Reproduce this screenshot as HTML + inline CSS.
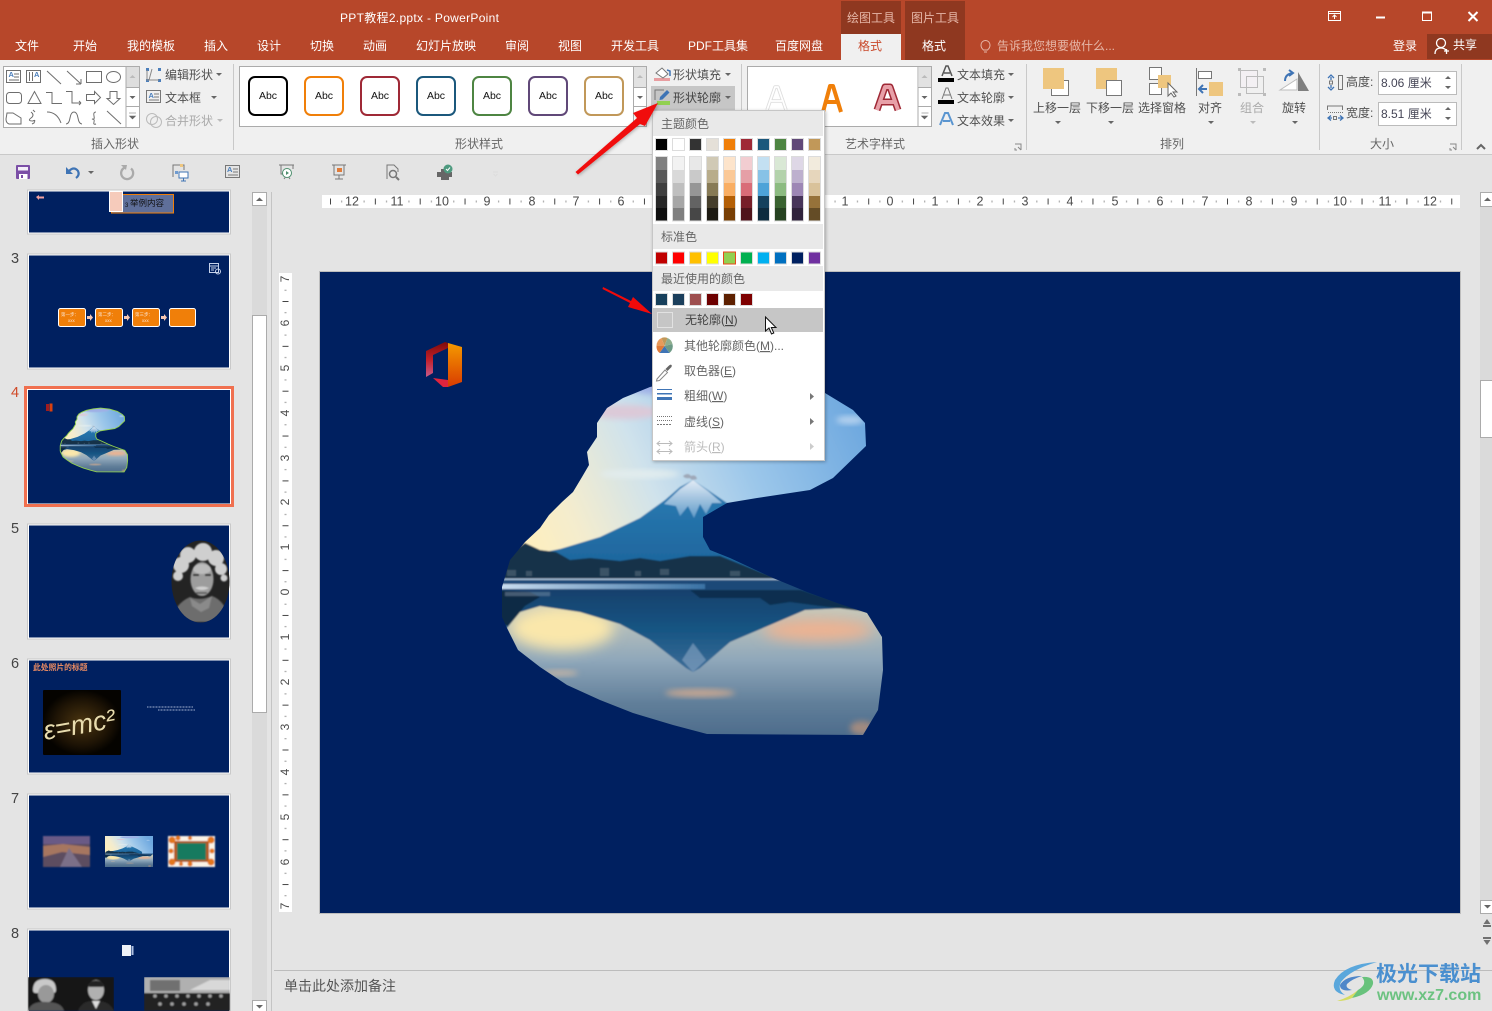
<!DOCTYPE html>
<html lang="zh"><head><meta charset="utf-8"><title>PPT教程2.pptx - PowerPoint</title>
<style>html,body{margin:0;padding:0;background:#e4e4e4;overflow:hidden;width:1492px;height:1011px}svg{display:block}text{font-family:"Liberation Sans","Noto Sans CJK SC",sans-serif}</style></head><body>
<svg xmlns="http://www.w3.org/2000/svg" width="1492" height="1011" viewBox="0 0 1492 1011" font-size="12" fill="#505050">
<defs>
<linearGradient id="sky" gradientUnits="userSpaceOnUse" x1="850" y1="395" x2="530" y2="540"><stop offset="0" stop-color="#6ea8df"/><stop offset=".35" stop-color="#9cc7ea"/><stop offset=".62" stop-color="#cfe2ec"/><stop offset=".85" stop-color="#f3eccf"/><stop offset="1" stop-color="#fdeebf"/></linearGradient>
<linearGradient id="mt" x1="0" y1="0" x2="0" y2="1"><stop offset="0" stop-color="#2a7cb4"/><stop offset="1" stop-color="#1b6198"/></linearGradient>
<linearGradient id="snow" x1="0" y1="0" x2="0" y2="1"><stop offset="0" stop-color="#e3ecf6"/><stop offset="1" stop-color="#5f9ac8"/></linearGradient>
<linearGradient id="low" gradientUnits="userSpaceOnUse" x1="0" y1="610" x2="0" y2="735"><stop offset="0" stop-color="#c4c8bb"/><stop offset=".4" stop-color="#8fa7ba"/><stop offset=".75" stop-color="#607e99"/><stop offset="1" stop-color="#4d6c8c"/></linearGradient>
<linearGradient id="shore" gradientUnits="userSpaceOnUse" x1="502" y1="0" x2="720" y2="0"><stop offset="0" stop-color="#c8dcef"/><stop offset="1" stop-color="#2f6a9f"/></linearGradient>
<linearGradient id="water" gradientUnits="userSpaceOnUse" x1="0" y1="588" x2="0" y2="672"><stop offset="0" stop-color="#123f6b"/><stop offset=".5" stop-color="#175583"/><stop offset="1" stop-color="#3d6d98"/></linearGradient>
<linearGradient id="off1" x1="0" y1="0" x2="0" y2="1"><stop offset="0" stop-color="#f59a00"/><stop offset="1" stop-color="#d83b01"/></linearGradient>
<linearGradient id="off2" x1="0" y1="0" x2="0" y2="1"><stop offset="0" stop-color="#7d0a0a"/><stop offset=".5" stop-color="#c0202a"/><stop offset="1" stop-color="#c85a8a"/></linearGradient>
<radialGradient id="emc"><stop offset="0" stop-color="#4b3510"/><stop offset=".7" stop-color="#1d1305"/><stop offset="1" stop-color="#050300"/></radialGradient>
<filter id="b3" x="-30%" y="-30%" width="160%" height="160%"><feGaussianBlur stdDeviation="3"/></filter>
<filter id="b6" x="-40%" y="-40%" width="180%" height="180%"><feGaussianBlur stdDeviation="7"/></filter>
<filter id="b1" x="-20%" y="-20%" width="140%" height="140%"><feGaussianBlur stdDeviation=".7"/></filter>
<filter id="bs" x="-5%" y="-5%" width="110%" height="110%"><feGaussianBlur stdDeviation=".9"/></filter>
<filter id="sh" x="-5%" y="-5%" width="110%" height="110%"><feDropShadow dx="1" dy="1" stdDeviation="1.500" flood-color="#000" flood-opacity=".28"/></filter>
<clipPath id="blob"><path id="blobp" d="M650 387L690 378L730 374L780 380L825 393L853 410L865 423L866 446L833 478L810 490L757 498L727 503L703 517L703 537L710 550L730 558L773 578L807 592L837 603L867 613L882 637L883 670L878 710L863 735L707 734L673 725L633 713L600 700L567 685L540 667L518 650L507 628L502 617L502 587L510 560L525 542L540 528L549 515L562 502L573 492L582 477L589 465L587 452L597 437L597 423L607 408L623 398Z"/></clipPath>
<g id="scene"><g filter="url(#bs)">
<rect x="490" y="370" width="400" height="218" fill="url(#sky)"/>
<ellipse cx="625" cy="412" rx="35" ry="7" fill="#dcc9d8" filter="url(#b3)"/><ellipse cx="700" cy="385" rx="80" ry="12" fill="#9fb0e6" filter="url(#b3)"/><ellipse cx="850" cy="420" rx="14" ry="4" fill="#b5d2ee" filter="url(#b3)"/><ellipse cx="640" cy="474" rx="40" ry="4" fill="#e3edee" filter="url(#b3)"/>
<path d="M545 552L560 549L600 537L640 518L665 500L680 487L693 480L708 490L727 503L760 525L800 560L800 584L525 584Z" fill="url(#mt)"/>
<path d="M664 504L680 489L693 480L708 491L722 503L712 503L706 514L700 504L694 518L688 506L680 516L676 506Z" fill="url(#snow)"/>
<path d="M683 476q5-4 8 0q5-2 6 3q-6 2-7-1q-5 1-7-2z" fill="#9fa8b8"/>
<path d="M495 582L500 560L525 543L540 550L556 552L570 560L590 558L620 561L640 558L660 561L690 556L720 556L760 572L790 582Z" fill="#14324a"/>
<g fill="#5c6f7e" opacity=".55"><rect x="507" y="570" width="9" height="6"/><rect x="526" y="571" width="6" height="5"/><rect x="600" y="568" width="9" height="8"/><rect x="635" y="571" width="6" height="5"/><rect x="660" y="569" width="9" height="6"/><rect x="730" y="571" width="10" height="5"/></g>
<rect x="490" y="580" width="400" height="10" fill="#1a4a78"/><rect x="502" y="578.500" width="280" height="1.500" fill="#a9c2d9"/><rect x="490" y="584" width="215" height="5" fill="url(#shore)"/>
<rect x="490" y="590" width="400" height="150" fill="url(#low)"/>
<ellipse cx="562" cy="628" rx="52" ry="22" fill="#fae7ab" filter="url(#b6)"/><ellipse cx="818" cy="630" rx="55" ry="11" fill="#efb290" filter="url(#b6)"/><ellipse cx="700" cy="693" rx="35" ry="4" fill="#c3a592" filter="url(#b3)"/><ellipse cx="560" cy="673" rx="18" ry="3" fill="#c0b3a6" filter="url(#b3)"/><ellipse cx="862" cy="728" rx="12" ry="7" fill="#a08a80" filter="url(#b3)"/>
<path d="M490 590L885 590L870 612L845 608L805 610L770 625L730 642L700 668L693 672L686 668L650 640L620 624L580 612L540 606L520 612L507 628L490 630Z" fill="url(#water)"/>
<path d="M682 660L693 643L706 660L693 672Z" fill="#8aa6c4" opacity=".6"/>
<path d="M490 590L530 592L540 597L525 606L508 626L495 622Z" fill="#112b45"/><rect x="505" y="592" width="45" height="4" fill="#8397ab" opacity=".45"/>
<path d="M690 590L800 590L870 612L820 606L790 602L770 605L760 598L700 598Z" fill="#0c2b4a" opacity=".85"/>
</g></g>
<g id="mtn"><g clip-path="url(#blob)"><use href="#scene"/></g></g>
<g id="arr"><path d="M0 0l3 3 3-3z" fill="#666"/></g>
<clipPath id="c8a"><rect x="28" y="977" width="86" height="34"/></clipPath>
<clipPath id="c8b"><rect x="144" y="977" width="86" height="34"/></clipPath>
<clipPath id="cein"><ellipse cx="200.500" cy="581.500" rx="29" ry="41"/></clipPath>
</defs>

<!-- base -->
<rect width="1492" height="1011" fill="#e4e4e4"/>
<!-- title bar -->
<rect width="1492" height="60" fill="#b7472a"/>
<g fill="#8f3820"><rect x="841" y="1" width="60" height="33"/><rect x="905" y="1" width="60" height="59"/><rect x="1427" y="34" width="65" height="25"/></g>
<rect x="841" y="34" width="60" height="27" fill="#f0f0f0"/>
<text x="340" y="22" fill="#fff" letter-spacing=".3">PPT教程2.pptx - PowerPoint</text>
<text x="847" y="22" fill="#e6b7a8">绘图工具</text><text x="911" y="22" fill="#e6b7a8">图片工具</text>
<g fill="#fff">
<text x="15" y="50">文件</text><text x="73" y="50">开始</text><text x="127" y="50">我的模板</text><text x="204" y="50">插入</text><text x="257" y="50">设计</text><text x="310" y="50">切换</text><text x="363" y="50">动画</text><text x="416" y="50">幻灯片放映</text><text x="505" y="50">审阅</text><text x="558" y="50">视图</text><text x="611" y="50">开发工具</text><text x="688" y="50">PDF工具集</text><text x="775" y="50">百度网盘</text><text x="922" y="50">格式</text><text x="1393" y="50">登录</text><text x="1453" y="49">共享</text>
</g>
<text x="858" y="50" fill="#c9492b">格式</text>
<g fill="none" stroke="#e6b7a8"><path d="M983.500 50q-2.500-2-2.500-5a4.500 4.500 0 0 1 9 0q0 3-2.500 5z"/><path d="M984 52h3"/></g>
<text x="997" y="50" fill="#e6b7a8">告诉我您想要做什么...</text>
<g fill="none" stroke="#fff"><rect x="1328.500" y="11.500" width="12" height="9"/><path d="M1328 13.500h13M1334.500 19v-4M1332.500 17l2-2 2 2"/><rect x="1422.500" y="12" width="9" height="8.500" stroke-width="1"/><path d="M1422 12.500h10" stroke-width="2"/><path d="M1468.500 12l9 9M1477.500 12l-9 9" stroke-width="2"/><path d="M1376 17.500h9" stroke-width="2"/>
<circle cx="1441" cy="43" r="4.500" stroke-width="1.300"/><path d="M1435 54q0-6 6-6q3 0 5 2M1444 51h5M1446.500 49v5" stroke-width="1.300"/></g>

<!-- ribbon -->
<rect y="60" width="1492" height="94" fill="#f0f0f0"/><rect y="154" width="1492" height="1" fill="#c9c9c9"/>
<g fill="#c9c9c9"><rect x="233" y="64" width="1" height="86"/><rect x="741" y="64" width="1" height="86"/><rect x="1026" y="64" width="1" height="86"/><rect x="1319" y="64" width="1" height="86"/><rect x="1461" y="64" width="1" height="86"/></g>
<g fill="#666"><text x="91" y="148">插入形状</text><text x="455" y="148">形状样式</text><text x="845" y="148">艺术字样式</text><text x="1160" y="148">排列</text><text x="1370" y="148">大小</text></g>

<!-- shape gallery -->
<rect x="3.500" y="66.500" width="136" height="61" fill="#fff" stroke="#ababab"/>
<rect x="126" y="67" width="13" height="20" fill="#dedede"/><path d="M126 66.500v61M126 87.500h13M126 106.500h13" stroke="#ababab" fill="none"/>
<path d="M129.500 78l3-3 3 3z" fill="#bbb"/><path d="M129.500 96l3 3 3-3z" fill="#666"/><path d="M129 113h7M129.500 116l3 3 3-3z" fill="#666" stroke="#666" stroke-width=".6"/>
<g fill="none" stroke="#6e6e6e" stroke-width="1">
<rect x="6.500" y="70.500" width="14" height="12"/><path d="M14 74h5M14 77h5M9 80h10"/>
<rect x="26.500" y="70.500" width="14" height="12"/><path d="M29.500 72v9M32.500 72v9"/>
<path d="M47 71l14 13M67 71l14 13M81 84v-5M81 84h-5"/>
<rect x="86.500" y="71.500" width="15" height="11"/><ellipse cx="113.500" cy="77" rx="7" ry="5.500"/>
<rect x="6.500" y="92.500" width="15" height="11" rx="3"/><path d="M28 103.500l6.500-12 6.500 12z"/><path d="M46 92.500h6v11h10M66 91.500h6v11.500h9M81 103l-2-2M81 103l-2 2"/>
<path d="M86.500 94.500h8v-3l6 6-6 6v-3h-8zM110 91.500h7v7h3l-6.500 6-6.500-6h3z"/>
<path d="M7 113h6l8 5v6H9q-3-1-3-5z"/><path d="M31 112q4 3 0 6t2 3q3-2 1 2l-2 1M33 110l2 2"/><path d="M47 112q10 0 14 11M66 124q3 0 4-6t4-6q3 0 4 6t4 6"/><path d="M96 112q-3 0-2 4t-2 3q3 0 2 3t2 2"/><path d="M107 111l14 13"/>
</g>
<text x="8.500" y="77" font-size="7.500" font-weight="700" fill="#4a7ebb">A</text><text x="34" y="77" font-size="7.500" font-weight="700" fill="#4a7ebb">A</text>
<g fill="#4a7ebb"><rect x="146" y="68" width="3" height="3"/><rect x="158" y="68" width="3" height="3"/><rect x="146" y="79" width="3" height="3"/><rect x="158" y="79" width="3" height="3"/></g><path d="M147 70v10h12M152 69l-3 11" fill="none" stroke="#888"/>
<text x="165" y="79">编辑形状</text><use href="#arr" x="216" y="73"/>
<g fill="none" stroke="#777"><rect x="146.500" y="90.500" width="14" height="12"/><path d="M154 94h5M154 97h5M149 100h10"/></g><text x="148.500" y="98" font-size="7.500" font-weight="700" fill="#4a7ebb">A</text>
<text x="165" y="102">文本框</text><use href="#arr" x="211" y="96"/>
<g fill="none" stroke="#bbb"><circle cx="152" cy="119" r="5.500"/><circle cx="156" cy="122" r="5.500"/></g>
<text x="165" y="125" fill="#aaa">合并形状</text><path d="M217 119l3 3 3-3z" fill="#bbb"/>

<!-- shape styles -->
<rect x="239.500" y="66.500" width="407" height="60" fill="#fff" stroke="#ababab"/>
<rect x="634" y="67" width="12" height="20" fill="#e2e2e2"/><path d="M633.500 66.500v60M633.500 87.500h13M633.500 106.500h13" stroke="#ababab" fill="none"/>
<path d="M637 78l3-3 3 3z" fill="#bbb"/><path d="M637 96l3 3 3-3z" fill="#666"/><path d="M637 113h7M637 116l3 3 3-3z" fill="#666" stroke="#666" stroke-width=".6"/>
<g fill="#fff" stroke-width="2"><rect x="249" y="77" width="38" height="38" rx="6" stroke="#000"/><rect x="305" y="77" width="38" height="38" rx="6" stroke="#f07f09"/><rect x="361" y="77" width="38" height="38" rx="6" stroke="#9f2936"/><rect x="417" y="77" width="38" height="38" rx="6" stroke="#1b587c"/><rect x="473" y="77" width="38" height="38" rx="6" stroke="#4e8542"/><rect x="529" y="77" width="38" height="38" rx="6" stroke="#604878"/><rect x="585" y="77" width="38" height="38" rx="6" stroke="#c19859"/></g>
<g fill="#111" font-size="10.500" text-anchor="middle"><text x="268" y="99">Abc</text><text x="324" y="99">Abc</text><text x="380" y="99">Abc</text><text x="436" y="99">Abc</text><text x="492" y="99">Abc</text><text x="548" y="99">Abc</text><text x="604" y="99">Abc</text></g>

<!-- fill/outline -->
<rect x="654" y="78" width="16" height="3" fill="#e89da0"/><path d="M656 73l6-5 6 6-5 4z" fill="#fff" stroke="#777"/><path d="M667 70l3 1v5" fill="none" stroke="#3f74b5" stroke-width="1.500"/>
<text x="673" y="79">形状填充</text><use href="#arr" x="725" y="73"/>
<rect x="651" y="86" width="84" height="24" fill="#c6c6c6"/>
<path d="M655 100v-10h9" fill="none" stroke="#777"/><path d="M660 97l7-7 2.500 2.500-7 7-3 .5z" fill="#3f74b5"/><rect x="657" y="101" width="13" height="4" fill="#92d050"/>
<text x="673" y="102" fill="#444">形状轮廓</text><use href="#arr" x="725" y="96"/>

<!-- wordart -->
<rect x="747.500" y="66.500" width="184" height="60" fill="#fff" stroke="#ababab"/>
<rect x="919" y="67" width="12" height="20" fill="#e2e2e2"/><path d="M918 66.500v60M918 87.500h13M918 106.500h13" stroke="#ababab" fill="none"/>
<path d="M921.500 78l3-3 3 3z" fill="#bbb"/><path d="M921.500 96l3 3 3-3z" fill="#666"/><path d="M921.500 113h7M921.500 116l3 3 3-3z" fill="#666" stroke="#666" stroke-width=".6"/>
<g fill="none" stroke-linejoin="round"><path d="M767 110l8-23h3l8 23M771 101h11" stroke="#dedede" stroke-width="3.500"/><path d="M767 110l8-23h3l8 23M771 101h11" stroke="#fff" stroke-width="1.800"/>
<path d="M823 112l7-26h3l8 26M827 102h10" stroke="#f07f09" stroke-width="4"/>
<path d="M877 110l8-23h5l8 23M881 102h13" stroke="#9f2936" stroke-width="7"/><path d="M877 110l8-23h5l8 23M881 102h13" stroke="#e8a0a8" stroke-width="4"/></g>
<path d="M942 76l4-10h2l4 10M944 73h6" fill="none" stroke="#555" stroke-width="1.500"/><rect x="938" y="78" width="16" height="4" fill="#000"/>
<path d="M942 99l4-11h2l4 11M944 95h6" fill="none" stroke="#777"/><rect x="938" y="100" width="16" height="4" fill="#000"/>
<path d="M940 125l5-12h3l5 12M943 121h7" fill="none" stroke="#5a95d0" stroke-width="2"/>
<text x="957" y="79">文本填充</text><text x="957" y="102">文本轮廓</text><text x="957" y="125">文本效果</text>
<use href="#arr" x="1008" y="73"/><use href="#arr" x="1008" y="96"/><use href="#arr" x="1008" y="119"/>
<path d="M1015 144h6v6M1017 150h-2v-2M1018 147l3 3" fill="none" stroke="#888"/>

<!-- arrange -->
<rect x="1051.500" y="80.500" width="17" height="15" fill="#fff" stroke="#777"/><rect x="1043" y="68" width="21" height="21" fill="#eec67f"/>
<rect x="1096" y="68" width="21" height="21" fill="#eec67f"/><rect x="1106.500" y="80.500" width="15" height="15" fill="#fff" stroke="#777"/>
<g fill="#fff" stroke="#777"><rect x="1149.500" y="67.500" width="12" height="12"/><rect x="1149.500" y="83.500" width="12" height="11"/></g><rect x="1158" y="75" width="13" height="13" fill="#eec67f"/><path d="M1168 83v13l3-3 3 4 2-1-3-4h4z" fill="#fff" stroke="#666"/>
<path d="M1196.500 68v28" stroke="#777"/><rect x="1198.500" y="71.500" width="13" height="7" fill="#fff" stroke="#777"/><rect x="1209" y="82" width="14" height="14" fill="#eec67f"/><path d="M1207 89h-7M1203 85l-4 4 4 4" fill="none" stroke="#3f74b5" stroke-width="2"/>
<g fill="#f3f0f3" stroke="#bbb"><rect x="1240.500" y="70.500" width="17" height="17"/><rect x="1246.500" y="76.500" width="17" height="17" fill="none"/></g><g fill="#bbb"><rect x="1238" y="68" width="3" height="3"/><rect x="1263" y="68" width="3" height="3"/><rect x="1238" y="93" width="3" height="3"/><rect x="1263" y="93" width="3" height="3"/></g>
<path d="M1280 90l17-11v11z" fill="#fff" stroke="#bbb"/><path d="M1298 72l11 19h-11z" fill="#7f7f7f"/><path d="M1285 81q0-7 8-8M1289 70l4 3-4 3" fill="none" stroke="#3f74b5" stroke-width="2"/>
<text x="1033" y="112">上移一层</text><text x="1086" y="112">下移一层</text><text x="1138" y="112">选择窗格</text><text x="1198" y="112">对齐</text><text x="1240" y="112" fill="#aaa">组合</text><text x="1282" y="112">旋转</text>
<use href="#arr" x="1055" y="121"/><use href="#arr" x="1108" y="121"/><use href="#arr" x="1208" y="121"/><path d="M1250 121l3 3 3-3z" fill="#bbb"/><use href="#arr" x="1292" y="121"/>

<!-- size -->
<rect x="1338.500" y="75.500" width="4" height="14" fill="none" stroke="#777"/><rect x="1329.500" y="81" width="3" height="3" fill="none" stroke="#777"/><path d="M1331 77v3M1328 78l3-3 3 3M1331 85v3M1328 87l3 3 3-3" fill="none" stroke="#3f74b5" stroke-width="1.300"/>
<path d="M1327.500 110v-4h15v4" fill="none" stroke="#777"/><path d="M1328 112.500h15" stroke="#777" stroke-dasharray="1 1"/><rect x="1333.500" y="116.500" width="3" height="3" fill="none" stroke="#777"/><path d="M1328 118h4M1331 115.500l-3 2.500 3 2.500M1338 118h5M1340 115.500l3 2.500-3 2.500" fill="none" stroke="#3f74b5" stroke-width="1.300"/>
<text x="1346" y="86">高度:</text><text x="1346" y="117">宽度:</text>
<rect x="1378.500" y="71.500" width="78" height="23" fill="#fff" stroke="#bbb"/><rect x="1378.500" y="102.500" width="78" height="23" fill="#fff" stroke="#bbb"/>
<text x="1381" y="87" fill="#445">8.06 厘米</text><text x="1381" y="118" fill="#445">8.51 厘米</text>
<path d="M1445 79l3-3 3 3zM1445 86l3 3 3-3zM1445 110l3-3 3 3zM1445 117l3 3 3-3z" fill="#666"/>
<path d="M1450 144h6v6M1452 150h-2v-2M1453 147l3 3" fill="none" stroke="#888"/>
<path d="M1477 149l4-4 4 4" fill="none" stroke="#666" stroke-width="2"/>

<!-- qat -->
<rect x="16" y="165" width="14" height="14" rx="1" fill="#7b4fa6"/><rect x="18" y="167" width="10" height="3.500" fill="#f3eef8"/><rect x="19" y="174" width="8.500" height="5" fill="#fff"/><rect x="21" y="175" width="2" height="3" fill="#7b4fa6"/>
<path d="M69 171q5-5 9 0q2 4-2 7" fill="none" stroke="#3f74b5" stroke-width="2.200"/><path d="M66 167v7h7z" fill="#3f74b5"/>
<use href="#arr" x="88" y="171"/>
<path d="M125 167.500a6 6 0 1 0 6 1" fill="none" stroke="#aaa" stroke-width="2.300"/><path d="M121 165l6 0-1 5z" fill="#aaa"/>
<g fill="none" stroke="#777"><path d="M173 177v-12h11v5"/><rect x="225.500" y="165.500" width="14" height="12"/><path d="M233 169h5M233 172h5M228 175h10"/><path d="M279 165h15M281 165v9h4M293 165v4M284 179l3-4M290 179l-2-3"/><path d="M332 165h14M334 165v10h10v-10M339 175v4M335 179h8"/><path d="M387 179v-14h7l4 4v3"/><circle cx="393" cy="174" r="3.500" stroke-width="1.500"/><path d="M396 177l3 3" stroke-width="2"/></g>
<text x="227" y="172" font-size="7.500" font-weight="700" fill="#4a7ebb">A</text>
<rect x="179" y="172" width="9" height="6" fill="#fff" stroke="#3f74b5"/><path d="M181 181h5M183.500 178v3" stroke="#3f74b5"/><rect x="175" y="171" width="3" height="3" fill="#6f9bd0"/><rect x="180" y="164" width="3" height="3" fill="#eec67f"/>
<circle cx="287" cy="173" r="4.500" fill="#fff" stroke="#4e8f6e"/><path d="M286 171l3 2-3 2z" fill="#4e8f6e"/>
<rect x="337" y="168" width="5" height="4" fill="#e07b39"/>
<path d="M437 172h4v-3h6v3h5v5h-3v3h-8v-3h-4z" fill="#666"/><circle cx="448" cy="169" r="4.500" fill="#4e9a7f"/><path d="M446 169l1.500 1.500 2.500-3" stroke="#fff" fill="none"/>
<path d="M493 172h5M493.500 174l2 2 2-2" stroke="#ddd" fill="none"/>

<!-- left panel scrollbar -->
<rect x="252" y="192" width="15" height="819" fill="#dadada"/>
<rect x="252.500" y="192.500" width="14" height="13" fill="#fff" stroke="#ababab"/><path d="M256 201l3.500-3.500L263 201z" fill="#666"/>
<rect x="252.500" y="315.500" width="14" height="397" fill="#fff" stroke="#ababab"/>
<rect x="252.500" y="1000.500" width="14" height="12" fill="#fff" stroke="#ababab"/><path d="M256 1005l3.500 3.500L263 1005z" fill="#666"/>
<rect x="271" y="192" width="1" height="819" fill="#c4c4c4"/>

<!-- thumbs -->
<g fill="#002060" stroke="#fff">
<rect x="27.500" y="190" width="203" height="44" stroke="#c9c9c9"/><rect x="27.500" y="254" width="203" height="115" stroke="#c9c9c9"/>
<rect x="27.500" y="524" width="203" height="115" stroke="#c9c9c9"/><rect x="27.500" y="659" width="203" height="115" stroke="#c9c9c9"/><rect x="27.500" y="794" width="203" height="115" stroke="#c9c9c9"/><rect x="27.500" y="929" width="203" height="90" stroke="#c9c9c9"/></g>
<g fill="none" stroke="#fff"><rect x="28.500" y="191" width="201" height="42"/><rect x="28.500" y="255" width="201" height="113"/><rect x="28.500" y="525" width="201" height="113"/><rect x="28.500" y="660" width="201" height="113"/><rect x="28.500" y="795" width="201" height="113"/><rect x="28.500" y="930" width="201" height="90"/></g>
<rect x="25.500" y="387.500" width="207" height="118" fill="#fff" stroke="#f0704f" stroke-width="3"/><rect x="28" y="390" width="202" height="113.500" fill="#002060"/>
<g font-size="14.500" fill="#444"><text x="11" y="263">3</text><text x="11" y="533">5</text><text x="11" y="668">6</text><text x="11" y="803">7</text><text x="11" y="938">8</text><text x="11" y="397" fill="#d04a28">4</text></g>
<!-- thumb 2 -->
<path d="M36 197l3-2v1.500h5v2h-5v1.500z" fill="#f0a0a0"/>
<rect x="111.500" y="194.500" width="62" height="18.500" fill="#5f6f9a" stroke="#f07f09"/><rect x="109.500" y="191.500" width="13" height="20" fill="#f6cbbb" stroke="#fff"/>
<text x="130" y="206" font-size="8.500" fill="#111">举例内容</text><text x="125" y="207" font-size="6" fill="#111">3</text>
<!-- thumb 3 -->
<g fill="#f07f09" stroke="#fff"><rect x="58.500" y="308.500" width="27" height="18" rx="2"/><rect x="95.500" y="308.500" width="27" height="18" rx="2"/><rect x="132.500" y="308.500" width="27" height="18" rx="2"/><rect x="169.500" y="308.500" width="26" height="18" rx="2"/></g>
<g font-size="4.500" fill="#fbe3cf"><text x="61" y="316">第一步：</text><text x="98" y="316">第二步：</text><text x="135" y="316">第三步：</text><text x="68" y="322">xxx</text><text x="105" y="322">xxx</text><text x="142" y="322">xxx</text></g>
<g fill="#f6c7b3"><path d="M87 316h3v-2l3 3.500-3 3.500v-2h-3z"/><path d="M124 316h3v-2l3 3.500-3 3.500v-2h-3z"/><path d="M161 316h3v-2l3 3.500-3 3.500v-2h-3z"/></g>
<g fill="none" stroke="#c6d2ea"><rect x="209.500" y="263.500" width="9" height="9"/><circle cx="218" cy="271.500" r="2.500"/><path d="M209 266h9M211 268h5M211 270h3"/></g>
<!-- thumb 4 -->
<use href="#mtn" transform="translate(28 390) scale(.177) translate(-320 -272)"/>
<use href="#blobp" transform="translate(28 390) scale(.177) translate(-320 -272)" fill="none" stroke="#92d050" stroke-width="5"/>
<rect x="46" y="404" width="3" height="7" fill="#a01c20"/><rect x="49.500" y="403.500" width="3" height="8" fill="#d8400f"/>
<!-- thumb 5 Einstein -->
<ellipse cx="200.500" cy="581.500" rx="29" ry="41" fill="#232323"/>
<g clip-path="url(#cein)"><g filter="url(#b1)">
<path d="M172 622q2-18 18-25q10 4 22-1q14 5 18 26z" fill="#6d6d6d"/><path d="M190 598l10 6 12-8-3 12-8 4-9-6z" fill="#8a8a8a"/>
<g fill="#cfcfcf"><circle cx="181" cy="565" r="8"/><circle cx="188" cy="555" r="8"/><circle cx="203" cy="552" r="9"/><circle cx="216" cy="558" r="8"/><circle cx="221" cy="569" r="6"/><circle cx="178" cy="576" r="5"/><circle cx="224" cy="578" r="3.500"/></g>
<ellipse cx="202" cy="579" rx="11.500" ry="17" fill="#9d9d9d"/><ellipse cx="202" cy="569" rx="9" ry="5" fill="#bcbcbc"/>
<path d="M193 575h6M205 575h6" stroke="#222" stroke-width="2"/><path d="M195 588q7-3 14 0q-7 4-14 0z" fill="#d0d0d0"/><path d="M196 593h11" stroke="#333" stroke-width="1.200"/>
</g></g>
<!-- thumb 6 -->
<text x="33" y="670" font-size="7.800" font-weight="700" fill="#ea8b62">此处照片的标题</text>
<rect x="43" y="690" width="78" height="65" rx="1" fill="url(#emc)"/>
<text transform="translate(45 740) rotate(-10)" font-family="Liberation Serif" font-style="italic" font-size="27" fill="#e8dcae">ε=mc²</text>
<g stroke="#c8d2ea" fill="none" opacity=".8" stroke-dasharray="1 .5"><path d="M147 707h46M158 710h37"/></g>
<!-- thumb 7 -->
<g filter="url(#b1)"><rect x="43" y="836" width="47" height="31" fill="#5d4e60"/><path d="M43 836h47v8H43z" fill="#695a86"/><path d="M43 846l20-2 27 3v8l-28-3-19 5z" fill="#a67660"/><path d="M60 867l9-19 13 19z" fill="#7b6f88"/></g>
<svg x="105" y="836" width="48" height="31" viewBox="495 370 395 370" preserveAspectRatio="none"><use href="#scene"/></svg>
<g filter="url(#b1)"><rect x="168" y="836" width="47" height="31" fill="#fbf3e6"/><rect x="174" y="841" width="35" height="21" fill="#b2561f"/><rect x="177" y="843" width="29" height="17" fill="#187a5e"/><g fill="#e2761f"><circle cx="172" cy="840" r="3.500"/><circle cx="178" cy="838" r="2.500"/><circle cx="211" cy="840" r="3.500"/><circle cx="172" cy="862" r="3.500"/><circle cx="171" cy="851" r="2.500"/><circle cx="211" cy="862" r="3.500"/><circle cx="212" cy="851" r="2.500"/><circle cx="190" cy="838" r="2"/><circle cx="190" cy="864" r="2.500"/><circle cx="181" cy="864" r="2"/></g></g>
<!-- thumb 8 -->
<path d="M122 945h9v11h-9z" fill="#eef2f8"/><rect x="131.500" y="946" width="2" height="9" fill="#aebfe0"/>
<g clip-path="url(#c8a)"><g filter="url(#b1)"><rect x="28" y="977" width="86" height="34" fill="#161616"/><path d="M33 990q0-11 12-11q11 0 11 11q0 3-3 3H36q-3 0-3-3z" fill="#c9c9c9"/><ellipse cx="46" cy="994" rx="8" ry="9" fill="#999"/><path d="M28 1011q3-10 18-9q16 0 18 9z" fill="#555"/><ellipse cx="96" cy="990" rx="8" ry="10" fill="#b0b0b0"/><path d="M88 984q8-7 16 0l-1 3H89z" fill="#222"/><path d="M78 1011q4-11 18-10q14 0 18 10z" fill="#2a2a2a"/><path d="M92 1001h8l-4 8z" fill="#ddd"/></g></g>
<g clip-path="url(#c8b)"><g filter="url(#b1)"><rect x="144" y="977" width="86" height="34" fill="#b0b0b0"/><rect x="144" y="993" width="86" height="18" fill="#242424"/><rect x="150" y="980" width="30" height="11" fill="#6f6f6f"/><path d="M190 990l20-10h20v10z" fill="#d8d8d8"/><g fill="#a0a0a0"><circle cx="155" cy="996" r="1.800"/><circle cx="166" cy="996" r="1.800"/><circle cx="177" cy="996" r="1.800"/><circle cx="188" cy="996" r="1.800"/><circle cx="199" cy="996" r="1.800"/><circle cx="210" cy="996" r="1.800"/><circle cx="221" cy="996" r="1.800"/><circle cx="160" cy="1004" r="1.800"/><circle cx="172" cy="1004" r="1.800"/><circle cx="184" cy="1004" r="1.800"/><circle cx="196" cy="1004" r="1.800"/><circle cx="208" cy="1004" r="1.800"/></g></g></g>

<!-- rulers -->
<defs>
<pattern id="rh" patternUnits="userSpaceOnUse" x="330" y="195" width="44.850" height="13"><rect x="0" y="3.500" width="1" height="6" fill="#444"/><rect x="11.200" y="5.500" width="1" height="2" fill="#999"/><rect x="33.600" y="5.500" width="1" height="2" fill="#999"/></pattern>
<pattern id="rv" patternUnits="userSpaceOnUse" x="279" y="301" width="13" height="44.850"><rect x="3.500" y="0" width="6" height="1" fill="#444"/><rect x="5.500" y="11.200" width="2" height="1" fill="#999"/><rect x="5.500" y="33.600" width="2" height="1" fill="#999"/></pattern>
</defs>
<rect x="322" y="195" width="1138" height="13" fill="#fff"/><rect x="322" y="195" width="1138" height="13" fill="url(#rh)"/>
<g font-size="12.500" fill="#4a4a4a" text-anchor="middle">
<text x="352" y="205.500">12</text><text x="397" y="205.500">11</text><text x="442" y="205.500">10</text><text x="487" y="205.500">9</text><text x="532" y="205.500">8</text><text x="576" y="205.500">7</text><text x="621" y="205.500">6</text><text x="845" y="205.500">1</text><text x="890" y="205.500">0</text><text x="935" y="205.500">1</text><text x="980" y="205.500">2</text><text x="1025" y="205.500">3</text><text x="1070" y="205.500">4</text><text x="1115" y="205.500">5</text><text x="1160" y="205.500">6</text><text x="1205" y="205.500">7</text><text x="1249" y="205.500">8</text><text x="1294" y="205.500">9</text><text x="1340" y="205.500">10</text><text x="1385" y="205.500">11</text><text x="1430" y="205.500">12</text></g>
<rect x="279" y="273" width="13" height="639" fill="#fff"/><rect x="279" y="273" width="13" height="639" fill="url(#rv)"/>
<g font-size="12" fill="#4a4a4a" text-anchor="middle">
<text transform="translate(289 279) rotate(-90)">7</text><text transform="translate(289 323) rotate(-90)">6</text><text transform="translate(289 368) rotate(-90)">5</text><text transform="translate(289 413) rotate(-90)">4</text><text transform="translate(289 458) rotate(-90)">3</text><text transform="translate(289 502) rotate(-90)">2</text><text transform="translate(289 547) rotate(-90)">1</text><text transform="translate(289 592) rotate(-90)">0</text><text transform="translate(289 637) rotate(-90)">1</text><text transform="translate(289 682) rotate(-90)">2</text><text transform="translate(289 727) rotate(-90)">3</text><text transform="translate(289 772) rotate(-90)">4</text><text transform="translate(289 817) rotate(-90)">5</text><text transform="translate(289 862) rotate(-90)">6</text><text transform="translate(289 906) rotate(-90)">7</text></g>

<!-- slide -->
<rect x="319.500" y="271.500" width="1141" height="642" fill="#002060" stroke="#bdbdbd"/>
<use href="#mtn"/>
<!-- office logo -->
<path d="M448 343l14 4v35l-14 5z" fill="url(#off1)"/><path d="M426 351l19-9 3 1v5l-15 7v18l-7 4z" fill="url(#off2)"/><path d="M433 378l15 2v7h-5z" fill="#e0243e"/>

<!-- right scrollbar -->
<rect x="1480" y="192" width="12" height="721" fill="#dadada"/>
<rect x="1480.500" y="192.500" width="14" height="14" fill="#fff" stroke="#ababab"/><path d="M1484 201l3.500-3.500L1491 201z" fill="#666"/>
<rect x="1480.500" y="380.500" width="14" height="57" fill="#fff" stroke="#ababab"/>
<rect x="1480.500" y="900.500" width="14" height="13" fill="#fff" stroke="#ababab"/><path d="M1484 905l3.500 3.500L1491 905z" fill="#666"/>
<path d="M1483.500 924l3.500-5 3.500 5zM1483 925h8v2h-8zM1483 937h8v2h-8zM1483.500 940h7l-3.500 5z" fill="#707070"/>

<!-- notes -->
<rect x="274" y="970" width="1218" height="1" fill="#bcbcbc"/>
<text x="284" y="991" font-size="14" fill="#555">单击此处添加备注</text>

<!-- watermark -->
<path d="M1377 962Q1345 964 1335 980Q1330 992 1345 995Q1337 990 1341 982Q1350 970 1377 962Z" fill="#5aa7dc"/>
<path d="M1362 976Q1345 976 1340 985Q1340 992 1352 990Q1345 988 1347 984Q1352 979 1362 976Z" fill="#4f86c9"/>
<path d="M1362 977Q1374 976 1373 984Q1370 994 1352 998Q1356 992 1358 990Q1368 984 1362 977Z" fill="#68c27c"/>
<path d="M1358 990Q1350 997 1337 1001Q1346 1001 1352 998Z" fill="#d5dc62"/>
<text x="1376" y="981" font-size="21" font-weight="700" fill="#4a8fcf">极光下载站</text>
<text x="1377" y="1000" font-size="16" font-weight="700" fill="#6cc281">www.xz7.com</text>

<!-- menu -->
<rect x="652.500" y="110.500" width="172" height="350" fill="#fff" stroke="#c6c6c6" filter="url(#sh)"/>
<g fill="#e9e9e9"><rect x="653" y="111" width="170" height="25"/><rect x="653" y="224" width="170" height="25"/><rect x="653" y="266" width="170" height="25"/></g>
<g fill="#666"><text x="661" y="128">主题颜色</text><text x="661" y="241">标准色</text><text x="661" y="283">最近使用的颜色</text></g>
<g stroke="#dcdcdc" stroke-width="1">
<rect x="655.500" y="138.500" width="12" height="12" fill="#000"/><rect x="672.500" y="138.500" width="12" height="12" fill="#fff"/><rect x="689.500" y="138.500" width="12" height="12" fill="#333"/><rect x="706.500" y="138.500" width="12" height="12" fill="#e5e0d8"/><rect x="723.500" y="138.500" width="12" height="12" fill="#f07f09"/><rect x="740.500" y="138.500" width="12" height="12" fill="#9f2936"/><rect x="757.500" y="138.500" width="12" height="12" fill="#1b587c"/><rect x="774.500" y="138.500" width="12" height="12" fill="#4e8542"/><rect x="791.500" y="138.500" width="12" height="12" fill="#604878"/><rect x="808.500" y="138.500" width="12" height="12" fill="#c19859"/>
<rect x="655.500" y="252" width="12" height="12" fill="#c00000"/><rect x="672.500" y="252" width="12" height="12" fill="#ff0000"/><rect x="689.500" y="252" width="12" height="12" fill="#ffc000"/><rect x="706.500" y="252" width="12" height="12" fill="#ffff00"/><rect x="740.500" y="252" width="12" height="12" fill="#00b050"/><rect x="757.500" y="252" width="12" height="12" fill="#00b0f0"/><rect x="774.500" y="252" width="12" height="12" fill="#0070c0"/><rect x="791.500" y="252" width="12" height="12" fill="#002060"/><rect x="808.500" y="252" width="12" height="12" fill="#7030a0"/>
<rect x="655.500" y="293.500" width="12" height="12" fill="#17405c"/><rect x="672.500" y="293.500" width="12" height="12" fill="#1b3f5c"/><rect x="689.500" y="293.500" width="12" height="12" fill="#9e4f4f"/><rect x="706.500" y="293.500" width="12" height="12" fill="#6d0000"/><rect x="723.500" y="293.500" width="12" height="12" fill="#5d2000"/><rect x="740.500" y="293.500" width="12" height="12" fill="#7e0000"/>
</g>
<rect x="723.500" y="252" width="12" height="12" fill="#92d050" stroke="#e8471b"/>
<!-- tint grid -->
<g>
<g transform="translate(656 157)"><rect width="11" height="13" fill="#7f7f7f"/><rect y="13" width="11" height="13" fill="#595959"/><rect y="26" width="11" height="13" fill="#3f3f3f"/><rect y="39" width="11" height="13" fill="#262626"/><rect y="51" width="11" height="13" fill="#0d0d0d"/></g>
<g transform="translate(673 157)"><rect width="11" height="13" fill="#f2f2f2"/><rect y="13" width="11" height="13" fill="#d9d9d9"/><rect y="26" width="11" height="13" fill="#bfbfbf"/><rect y="39" width="11" height="13" fill="#a6a6a6"/><rect y="51" width="11" height="13" fill="#7f7f7f"/></g>
<g transform="translate(690 157)"><rect width="11" height="13" fill="#e8e8e8"/><rect y="13" width="11" height="13" fill="#c9c9c9"/><rect y="26" width="11" height="13" fill="#969696"/><rect y="39" width="11" height="13" fill="#636363"/><rect y="51" width="11" height="13" fill="#474747"/></g>
<g transform="translate(707 157)"><rect width="11" height="13" fill="#d0c9b5"/><rect y="13" width="11" height="13" fill="#b8ac8a"/><rect y="26" width="11" height="13" fill="#877a55"/><rect y="39" width="11" height="13" fill="#453e2b"/><rect y="51" width="11" height="13" fill="#1d1a12"/></g>
<g transform="translate(724 157)"><rect width="11" height="13" fill="#fde4cb"/><rect y="13" width="11" height="13" fill="#fbc997"/><rect y="26" width="11" height="13" fill="#f9ae63"/><rect y="39" width="11" height="13" fill="#b45f06"/><rect y="51" width="11" height="13" fill="#783f04"/></g>
<g transform="translate(741 157)"><rect width="11" height="13" fill="#f2cdd1"/><rect y="13" width="11" height="13" fill="#e59fa6"/><rect y="26" width="11" height="13" fill="#d96c78"/><rect y="39" width="11" height="13" fill="#771f29"/><rect y="51" width="11" height="13" fill="#4f141b"/></g>
<g transform="translate(758 157)"><rect width="11" height="13" fill="#c3e0f2"/><rect y="13" width="11" height="13" fill="#87c2e6"/><rect y="26" width="11" height="13" fill="#4da3d8"/><rect y="39" width="11" height="13" fill="#14415d"/><rect y="51" width="11" height="13" fill="#0d2b3e"/></g>
<g transform="translate(775 157)"><rect width="11" height="13" fill="#d9e8d5"/><rect y="13" width="11" height="13" fill="#b3d2ab"/><rect y="26" width="11" height="13" fill="#8cbb81"/><rect y="39" width="11" height="13" fill="#3a6331"/><rect y="51" width="11" height="13" fill="#264221"/></g>
<g transform="translate(792 157)"><rect width="11" height="13" fill="#ded7e6"/><rect y="13" width="11" height="13" fill="#bdb0ce"/><rect y="26" width="11" height="13" fill="#9d87b5"/><rect y="39" width="11" height="13" fill="#47355a"/><rect y="51" width="11" height="13" fill="#30233c"/></g>
<g transform="translate(809 157)"><rect width="11" height="13" fill="#f2ebdd"/><rect y="13" width="11" height="13" fill="#e6d6bc"/><rect y="26" width="11" height="13" fill="#d9c29a"/><rect y="39" width="11" height="13" fill="#96723a"/><rect y="51" width="11" height="13" fill="#644c26"/></g>
</g>
<g fill="none" stroke="#dcdcdc"><rect x="655.500" y="156.500" width="12" height="64.500"/><rect x="672.500" y="156.500" width="12" height="64.500"/><rect x="689.500" y="156.500" width="12" height="64.500"/><rect x="706.500" y="156.500" width="12" height="64.500"/><rect x="723.500" y="156.500" width="12" height="64.500"/><rect x="740.500" y="156.500" width="12" height="64.500"/><rect x="757.500" y="156.500" width="12" height="64.500"/><rect x="774.500" y="156.500" width="12" height="64.500"/><rect x="791.500" y="156.500" width="12" height="64.500"/><rect x="808.500" y="156.500" width="12" height="64.500"/></g>
<!-- items -->
<rect x="653" y="308" width="170" height="24" fill="#c6c6c6"/><rect x="657.500" y="312.500" width="15" height="15" fill="none" stroke="#e2e2e2"/>
<g><text x="685" y="324" fill="#444">无轮廓(<tspan style="text-decoration:underline">N</tspan>)</text>
<text x="684" y="350" fill="#666">其他轮廓颜色(<tspan style="text-decoration:underline">M</tspan>)...</text>
<text x="684" y="375" fill="#666">取色器(<tspan style="text-decoration:underline">E</tspan>)</text>
<text x="684" y="400" fill="#666">粗细(<tspan style="text-decoration:underline">W</tspan>)</text>
<text x="684" y="426" fill="#666">虚线(<tspan style="text-decoration:underline">S</tspan>)</text>
<text x="684" y="451" fill="#bbb">箭头(<tspan style="text-decoration:underline">R</tspan>)</text></g>
<!-- pie -->
<path d="M664.500 346l-3-8a8.500 8.500 0 0 1 6 0z" fill="#c19859"/><path d="M664.500 346l3-8a8.500 8.500 0 0 1 5 6z" fill="#8fae8f"/><path d="M664.500 346l8 -2a8.500 8.500 0 0 1-3 9z" fill="#6d9a86"/><path d="M664.500 346l5 7h-10z" fill="#3f74b5"/><path d="M664.500 346l-5 7a8.500 8.500 0 0 1-3-7z" fill="#e07b39"/><path d="M664.500 346h-8a8.500 8.500 0 0 1 5-8z" fill="#e89a5a"/>
<!-- dropper -->
<path d="M657 379l8-9 2.500 2.500-8 8-3 .5z" fill="#fff" stroke="#888"/><path d="M665.500 369l3-3q2-2 3-1t-1 3l-3 3z" fill="#666"/>
<!-- lines -->
<g fill="#3f74b5"><rect x="657" y="389" width="15" height="1"/><rect x="657" y="393" width="15" height="1.500"/><rect x="657" y="397" width="15" height="3"/></g>
<g fill="none" stroke="#777"><path d="M657 416.500h15" stroke-dasharray="1 1"/><path d="M657 420.500h15" stroke-dasharray="1 1"/><path d="M657 424.500h15" stroke-dasharray="2 1"/></g>
<g fill="none" stroke="#bbb"><path d="M657 443.500h15M669 441l3 2.500-3 2.500M657 451.500h15M660 449l-3 2.500 3 2.500M669 449l3 2.500-3 2.500M660 441l-3 2.500 3 2.500" stroke-width="1"/></g>
<path d="M810 393l4 3.500-4 3.500z" fill="#777"/><path d="M810 418l4 3.500-4 3.500z" fill="#777"/><path d="M810 443l4 3.500-4 3.500z" fill="#ccc"/>
<!-- cursor -->
<path d="M765.500 317v14l3.500-3 2.500 6 2.300-1-2.500-5.500h4.700z" fill="#fff" stroke="#111" stroke-width="1"/>
<!-- red arrows -->
<path d="M575.500 172L578 174.500L640 124L645 126L658 103L633 113L637 118Z" fill="#f00a0a" filter="url(#sh)"/>
<path d="M603 287L602.500 289L630 303L628 307L652 314L633 297L631 301Z" fill="#f00a0a"/>
</svg>
</body></html>
